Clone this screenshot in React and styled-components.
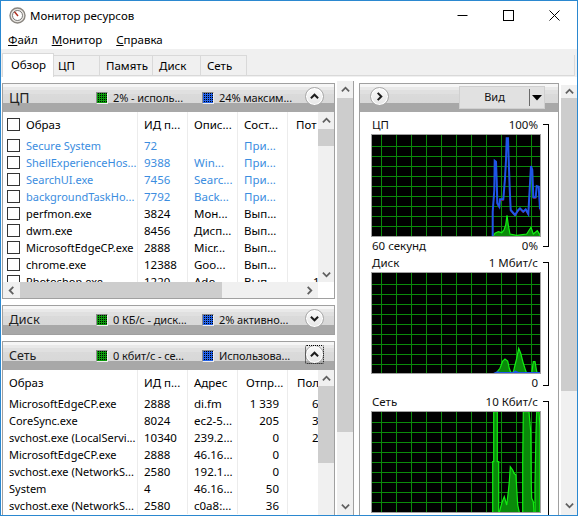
import React from 'react';
import styled, { createGlobalStyle } from 'styled-components';

const Global = createGlobalStyle`
  html, body { margin: 0; padding: 0; background: #fff; }
  body { width: 578px; height: 516px; overflow: hidden; font-family: "Noto Sans", "Open Sans", sans-serif; font-size: 11.5px; color: #000; }
  * { box-sizing: border-box; }
`;

const Win = styled.div`
  width: 578px; height: 516px; display: flex; flex-direction: column; overflow: hidden;
  border: 1px solid #2b88d0; background: #fff;
`;
const TitleBar = styled.div`
  height: 29px; flex: none; display: flex; align-items: center; padding-left: 8px; font-size: 11.5px;
`;
const TitleText = styled.div` flex: 1; margin-left: 4px; `;
const Caption = styled.div`
  width: 46px; height: 29px; display: flex; align-items: center; justify-content: center;
`;
const MenuBar = styled.div`
  height: 19px; flex: none; display: flex; gap: 14px; padding-left: 7px; align-items: center;
  u { text-decoration: underline; }
`;
const Tabs = styled.div`
  height: 28px; flex: none; display: flex; align-items: flex-start; background: #f0f0f0; padding: 4px 1px 0; position: relative;
`;
const Tab = styled.div`
  height: ${p => (p.$active ? '24px' : '21px')}; margin-top: ${p => (p.$active ? '0' : '2px')};
  width: ${p => p.$w}px; padding-left: ${p => p.$pad}px; display: flex; align-items: center;
  border: 1px solid #d9d9d9; border-left: ${p => (p.$active ? '1px solid #d9d9d9' : 'none')};
  background: ${p => (p.$active ? '#fff' : '#f0f0f0')}; border-bottom: ${p => (p.$active ? 'none' : '1px solid #d9d9d9')};
  position: relative; z-index: 1; padding-bottom: ${p => (p.$active ? '3px' : '0')};
`;
const TabLine = styled.div` flex: 1; height: 21px; margin-top: 2px; margin-right: 1px; border-bottom: 1px solid #d9d9d9; border-right: 1px solid #d9d9d9; `;
const Main = styled.div`
  flex: 1; min-height: 0; display: flex; padding: 6px 0 0 1px; overflow: hidden; background: #fff;
`;
const LeftCol = styled.div`
  width: 333px; flex: none; display: flex; flex-direction: column; gap: 6px;
`;
const Panel = styled.div`
  flex: ${p => (p.$fill ? '1' : 'none')}; height: ${p => (p.$h ? p.$h + 'px' : 'auto')}; min-height: 0;
  border: 1px solid #a0a0a0; border-bottom: ${p => (p.$open ? 'none' : '1px solid #a0a0a0')}; display: flex; flex-direction: column; overflow: hidden; background: #fff;
`;
const PanelHead = styled.div`
  height: 28px; flex: none; display: flex; align-items: center; position: relative;
  background: linear-gradient(#f6f6f6 0, #f6f6f6 3px, #e9e9e9 3px, #e9e9e9 6px, #e0e0e0 6px, #e0e0e0 10px, #dadada 10px, #d8d8d8 19px, #a8a8a8 19px, #a8a8a8 28px);
`;
const HeadTitle = styled.div`
  width: 93px; padding-left: 6px; font-size: ${p => p.$fs}px; padding-bottom: 2px; flex: none; color: #222;
`;
const Stat = styled.div`
  width: ${p => p.$w}px; flex: none; display: flex; align-items: center; gap: 5px; padding-bottom: 1px; font-size: 11px; letter-spacing: -0.1px; white-space: nowrap; color: #111;
`;
const Swatch = styled.div`
  width: 12px; height: 12px; flex: none; border: 1px solid #8c8c8c; border-bottom-color: #eee; border-right-color: #eee;
  background-color: ${p => p.$c};
  background-image: repeating-conic-gradient(#000 0 25%, transparent 0 100%);
  background-size: 2px 2px;
`;
const RoundWrap = styled.div`
  width: 19px; height: 19px; border-radius: 50%; flex: none; position: relative;
  margin-bottom: ${p => p.$mb || 0}px;
  background: linear-gradient(#fafafa, #e6e6e6); border: 1px solid #a8a8a8; box-shadow: inset 0 0 0 1px #fff;
  display: flex; align-items: center; justify-content: center;
  ${p => p.$focus && `
    &::after { content: ''; position: absolute; inset: -1px; border-radius: 2px; border: 1px dotted #000; }
  `}
`;
const RoundSlot = styled.div`
  width: 26px; flex: none; margin-left: auto; margin-right: 7px; padding-bottom: 3px; display:flex; justify-content:center;
`;
const Arrow = ({ d }) => (
  <svg width="9" height="9" viewBox="0 0 10 10"><path d={d} fill="none" stroke="#1c1c1c" strokeWidth="2.2" /></svg>
);
const UP = 'M1 7 L5 3 L9 7';
const DOWN = 'M1 3 L5 7 L9 3';
const RIGHT = 'M3 1 L7 5 L3 9';

const TableWrap = styled.div` flex: 1; min-height: 0; display: flex; overflow: hidden; `;
const TableClip = styled.div` flex: 1; min-width: 0; overflow: hidden; display: flex; flex-direction: column; `;
const Row = styled.div`
  display: grid; grid-template-columns: ${p => p.$cols}; height: ${p => p.$h || 17}px; flex: none;
  align-items: center; color: ${p => (p.$blue ? '#3b8de0' : '#000')}; white-space: nowrap;
`;
const Cell = styled.div`
  overflow: hidden; height: 100%; display: flex; align-items: center; gap: 6px;
  padding-left: ${p => p.$pl ?? 6}px; padding-right: ${p => p.$pr ?? 0}px;
  justify-content: ${p => (p.$right ? 'flex-end' : 'flex-start')};
  border-right: ${p => (p.$last ? 'none' : '1px solid #ececec')};
`;
const Name = styled.span`
  font-size: 11px; letter-spacing: 0;
`;
const Check = styled.span`
  width: 13px; height: 13px; flex: none; border: 1px solid #333; background: #fff; display: inline-block;
`;
const VBar = styled.div`
  width: 16px; flex: none; background: #f0f0f0; display: flex; flex-direction: column; overflow: hidden; height: 100%;
`;
const BarBtn = styled.div`
  height: ${p => p.$h || 16}px; flex: none; display: flex; align-items: center; justify-content: center; background: #f0f0f0;
`;
const Thumb = styled.div`
  height: ${p => p.$h}px; flex: none; background: #cdcdcd;
`;
const Spacer = styled.div` flex: 1; `;
const SmallArrow = ({ d }) => (
  <svg width="9" height="9" viewBox="0 0 10 10"><path d={d} fill="none" stroke="#606060" strokeWidth="2" /></svg>
);
const HBar = styled.div`
  height: 16px; flex: none; background: #f0f0f0; display: flex; align-items: center;
`;
const HThumb = styled.div` width: 202px; height: 16px; background: #cdcdcd; `;
const HBtn = styled.div` width: 17px; height: 16px; display:flex; align-items:center; justify-content:center; flex:none; `;
const HCorner = styled.div` width: 16px; height: 16px; flex: none; background: #fff; `;
const Splitter = styled.div`
  width: 6px; flex: none; margin-top: -2px; border-left: 1px solid #a0a0a0;
`;
const SideBar = styled.div`
  width: 16px; flex: none; display: flex; margin-left: 2px; margin-top: ${p => p.$mt}px;
`;
const RightPanel = styled.div`
  width: 200px; flex: none; border: 1px solid #a0a0a0; border-bottom: none; display: flex; flex-direction: column;
`;
const RightHead = styled(PanelHead)`
  padding-left: 10px;
`;
const ViewBtn = styled.div`
  width: 86px; height: 23px; margin-left: auto; margin-right: 13px; margin-bottom: 1px; background: #e1e1e1; display: flex; align-items: center; border: 1px solid #d0d0d0;
`;
const ViewLabel = styled.div` flex: 1; text-align: center; font-size: 11px; color: #111; border-right: 1px solid #6a6a6a; line-height: 16px; height: 17px; `;
const ViewDrop = styled.div` width: 14px; display: flex; justify-content: center; `;
const Charts = styled.div`
  display: flex; flex-direction: column; padding: 4px 0 0 11px; overflow: hidden; flex: 1;
`;
const ChartBlock = styled.div` width: 178px; flex: none; position: relative; height: ${p => p.$h}px; padding-right: 8px; `;
const ChartLabels = styled.div`
  display: flex; justify-content: space-between; height: 18px; padding-bottom: 2px; align-items: center; width: 167px; padding-left: 1px; font-size: 11.5px; color: #111;
`;
const Bracket = styled.div`
  position: absolute; left: 172px; top: 8px; width: 6px; height: ${p => p.$h}px;
  border: 1px solid #000; border-left: none; ${p => (p.$open ? 'border-bottom: none;' : '')}
`;
const Plot = styled.div`
  width: 170px; height: ${p => p.$h}px; border: 1px solid #a0a0a0; background: #000; overflow: hidden; flex: none;
  svg { display: block; }
`;

const Icon = () => (
  <svg width="17" height="17" viewBox="0 0 17 17">
    <circle cx="8.5" cy="8.5" r="7.5" fill="#e9e6e2" stroke="#8a8680" strokeWidth="1.4" />
    <circle cx="8.5" cy="8.5" r="5" fill="#fff" stroke="#5b5b5b" strokeWidth="0.8" />
    <path d="M5.5 4.8 L9 9" stroke="#b03020" strokeWidth="1.4" />
  </svg>
);

function Grid({ w = 168, h, offY }) {
  const v = [], hz = [];
  for (let x = 9; x < w; x += 15) v.push(x);
  for (let y = offY; y < h; y += 10) hz.push(y);
  return (
    <g stroke="#0a8a0a" strokeWidth="1" shapeRendering="crispEdges">
      {v.map(x => <line key={x} x1={x + 0.5} x2={x + 0.5} y1="0" y2={h} />)}
      {hz.map(y => <line key={y} x1="0" x2={w} y1={y + 0.5} y2={y + 0.5} />)}
    </g>
  );
}

// Traces are written in the reference crop's 3x coordinates and brought back to plot pixels.
const traced = (s, oy) => s.split(' ').map(p => {
  const [x, y] = p.split(',');
  return `${(x / 3 - 12).toFixed(1)},${(y / 3 - oy).toFixed(1)}`;
}).join(' ');

const Area = ({ pts, oy }) => {
  const t = traced(pts, oy);
  return (
    <>
      <polygon points={t} fill="#0a8a0a" />
      <polyline points={t} fill="none" stroke="#12ee12" strokeWidth="1.2" />
    </>
  );
};
const Trace = ({ pts, oy, dy = 0, color = '#1f55e8', width = 2 }) => (
  <polyline points={traced(pts, oy)} transform={`translate(0 ${dy})`} fill="none" stroke={color} strokeWidth={width} />
);

const CPU_BLUE = '398,378 398,305 403,240 404,152 408,155 410,210 412,280 418,290 420,268 430,268 435,205 438,150 440,85 444,85 446,150 449,235 452,300 465,315 475,300 480,295 490,305 497,298 505,312 510,220 513,168 517,180 520,262 527,262 530,228 536,230 538,260 540,298';

const CpuChart = () => (
  <svg width="168" height="101" viewBox="0 0 168 101">
    <Grid h={101} offY={11} />
    <Area oy={25} pts="400,378 405,370 415,365 425,368 432,360 437,345 441,316 445,345 450,372 470,376 500,372 513,352 520,372 532,362 540,375 540,380 400,380" />
    <Trace pts={CPU_BLUE} oy={25} dy={1.2} color="#8a1038" width={1} />
    <Trace pts={CPU_BLUE} oy={25} />
  </svg>
);
const DiskChart = () => (
  <svg width="168" height="100" viewBox="0 0 168 100">
    <Grid h={100} offY={11} />
    <Area oy={18} pts="405,356 412,350 420,340 428,318 435,312 443,318 448,340 452,352 460,352 465,330 470,310 476,280 482,295 490,325 498,350 505,356" />
    <Area oy={18} pts="515,356 520,320 525,320 530,350 535,356" />
    <Trace oy={18} pts="402,356 412,352 420,354 460,354 466,350 475,354 540,354" />
  </svg>
);
const NetChart = () => (
  <svg width="168" height="100" viewBox="0 0 168 100">
    <Grid h={100} offY={10} />
    <Area oy={27} pts="398,382 398,230 401,230 401,80 412,80 412,230 416,230 416,382" />
    <Area oy={27} pts="418,382 425,355 433,335 440,360 445,320 448,290 451,245 458,255 462,265 468,270 470,310 473,360 478,382" />
    <Area oy={27} pts="488,382 488,235 490,80 507,80 512,140 514,300 515,340 520,350 522,382" />
    <Area oy={27} pts="525,382 525,300 528,140 530,80 537,80 540,130 540,382" />
  </svg>
);

const cols = '135px 50px 50px 50px 40px';

const cpuRows = [
  ['Secure System', '72', '', 'При...', '', 1],
  ['ShellExperienceHos...', '9388', 'Win...', 'При...', '', 1],
  ['SearchUI.exe', '7456', 'Searc...', 'При...', '', 1],
  ['backgroundTaskHo...', '7792', 'Back...', 'При...', '', 1],
  ['perfmon.exe', '3824', 'Мон...', 'Вып...', ''],
  ['dwm.exe', '8456', 'Дисп...', 'Вып...', ''],
  ['MicrosoftEdgeCP.exe', '2888', 'Micr...', 'Вып...', ''],
  ['chrome.exe', '12388', 'Goo...', 'Вып...', ''],
  ['Photoshop.exe', '1220', 'Ado...', 'Вып...', '1'],
];
const netRows = [
  ['MicrosoftEdgeCP.exe', '2888', 'di.fm', '1 339', '6'],
  ['CoreSync.exe', '8024', 'ec2-5...', '205', '3'],
  ['svchost.exe (LocalServi...', '10340', '239.2...', '0', '2'],
  ['MicrosoftEdgeCP.exe', '2888', '46.16...', '0', ''],
  ['svchost.exe (NetworkS...', '2580', '192.1...', '0', ''],
  ['System', '4', '46.16...', '50', ''],
  ['svchost.exe (NetworkS...', '2580', 'c0a8:...', '36', ''],
];

const StatHead = ({ title, fs, a, b, arrow, focus }) => (
  <PanelHead>
    <HeadTitle $fs={fs}>{title}</HeadTitle>
    <Stat $w={106}><Swatch $c="#0b9a0b" />{a}</Stat>
    <Stat $w={96}><Swatch $c="#2563e8" />{b}</Stat>
    <RoundSlot><RoundWrap $focus={focus}><Arrow d={arrow} /></RoundWrap></RoundSlot>
  </PanelHead>
);

export default function App() {
  return (
    <Win>
      <Global />
      <TitleBar>
        <Icon />
        <TitleText>Монитор ресурсов</TitleText>
        <Caption><svg width="11" height="11" viewBox="0 0 11 11"><path d="M0.5 5.5H10.5" stroke="#000" /></svg></Caption>
        <Caption><svg width="11" height="11" viewBox="0 0 11 11"><rect x="0.5" y="0.5" width="10" height="10" fill="none" stroke="#000" /></svg></Caption>
        <Caption><svg width="11" height="11" viewBox="0 0 11 11"><path d="M0.5 0.5L10.5 10.5M10.5 0.5L0.5 10.5" stroke="#000" /></svg></Caption>
      </TitleBar>
      <MenuBar>
        <span><u>Ф</u>айл</span><span><u>М</u>онитор</span><span><u>С</u>правка</span>
      </MenuBar>
      <Tabs>
        <Tab $active $w={52} $pad={8}>Обзор</Tab>
        <Tab $w={46} $pad={4}>ЦП</Tab>
        <Tab $w={53} $pad={6}>Память</Tab>
        <Tab $w={48} $pad={6}>Диск</Tab>
        <Tab $w={46} $pad={6}>Сеть</Tab>
        <TabLine />
      </Tabs>
      <Main>
        <LeftCol>
          <Panel $h={216}>
            <StatHead title="ЦП" fs={14} a="2% - исполь..." b="24% максим..." arrow={UP} />
            <TableWrap>
              <TableClip>
                <Row $cols={cols} $h={25}>
                  <Cell $pl={4}><Check />Образ</Cell><Cell>ИД п...</Cell><Cell>Опис...</Cell><Cell>Сост...</Cell><Cell $last $pl={8}>Пот</Cell>
                </Row>
                {cpuRows.map(r => (
                  <Row key={r[0]} $cols={cols} $blue={r[5]}>
                    <Cell $pl={4}><Check /><Name>{r[0]}</Name></Cell><Cell>{r[1]}</Cell><Cell>{r[2]}</Cell><Cell>{r[3]}</Cell>
                    <Cell $last $pl={25}>{r[4]}</Cell>
                  </Row>
                ))}
              </TableClip>
              <VBar>
                <BarBtn $h={17}><SmallArrow d={UP} /></BarBtn>
                <Thumb $h={17} />
                <Spacer />
                <BarBtn><SmallArrow d={DOWN} /></BarBtn>
              </VBar>
            </TableWrap>
            <HBar>
              <HBtn><SmallArrow d="M7 1 L3 5 L7 9" /></HBtn>
              <HThumb /><Spacer />
              <HBtn><SmallArrow d={RIGHT} /></HBtn>
              <HCorner />
            </HBar>
          </Panel>
          <Panel $h={30}>
            <StatHead title="Диск" fs={13} a="0 КБ/с - диск..." b="2% активно..." arrow={DOWN} />
          </Panel>
          <Panel $fill $open>
            <StatHead title="Сеть" fs={12.5} a="0 кбит/с - се..." b="Использова..." arrow={UP} focus />
            <TableWrap>
              <TableClip>
                <Row $cols={cols} $h={25}>
                  <Cell $pl={6}>Образ</Cell><Cell>ИД п...</Cell><Cell>Адрес</Cell><Cell $pl={8}>Отпр...</Cell><Cell $last $pl={9}>Пол</Cell>
                </Row>
                {netRows.map(r => (
                  <Row key={r[0] + r[2]} $cols={cols}>
                    <Cell $pl={6}><Name>{r[0]}</Name></Cell><Cell>{r[1]}</Cell><Cell>{r[2]}</Cell><Cell $right $pr={8}>{r[3]}</Cell>
                    <Cell $last $pl={24}>{r[4]}</Cell>
                  </Row>
                ))}
              </TableClip>
              <VBar>
                <BarBtn><SmallArrow d={UP} /></BarBtn>
                <Thumb $h={77} />
                <Spacer />
              </VBar>
            </TableWrap>
          </Panel>
        </LeftCol>
        <SideBar $mt={-2}>
          <VBar>
            <BarBtn $h={17}><SmallArrow d={UP} /></BarBtn>
            <Thumb $h={334} />
            <Spacer />
            <BarBtn $h={18}><SmallArrow d={DOWN} /></BarBtn>
          </VBar>
        </SideBar>
        <Splitter />
        <RightPanel>
          <RightHead>
            <RoundWrap $mb={4}><Arrow d={RIGHT} /></RoundWrap>
            <ViewBtn>
              <ViewLabel>Вид</ViewLabel>
              <ViewDrop><svg width="10" height="6" viewBox="0 0 10 6"><path d="M0 0H10L5 5.5Z" fill="#000" /></svg></ViewDrop>
            </ViewBtn>
          </RightHead>
          <Charts>
            <ChartBlock $h={138}>
              <Bracket $h={123} />
              <ChartLabels><span>ЦП</span><span>100%</span></ChartLabels>
              <Plot $h={103}><CpuChart /></Plot>
              <ChartLabels><span>60 секунд</span><span>0%</span></ChartLabels>
            </ChartBlock>
            <ChartBlock $h={139}>
              <Bracket $h={124} />
              <ChartLabels><span>Диск</span><span>1 Мбит/с</span></ChartLabels>
              <Plot $h={102}><DiskChart /></Plot>
              <ChartLabels><span></span><span>0</span></ChartLabels>
            </ChartBlock>
            <ChartBlock $h={130}>
              <Bracket $h={130} $open />
              <ChartLabels><span>Сеть</span><span>10 Кбит/с</span></ChartLabels>
              <Plot $h={102}><NetChart /></Plot>
            </ChartBlock>
          </Charts>
        </RightPanel>
        <SideBar $mt={2}>
          <VBar>
            <BarBtn $h={13}><SmallArrow d={UP} /></BarBtn>
            <Thumb $h={293} />
            <Spacer />
            <BarBtn $h={20}><SmallArrow d={DOWN} /></BarBtn>
          </VBar>
        </SideBar>
      </Main>
    </Win>
  );
}
